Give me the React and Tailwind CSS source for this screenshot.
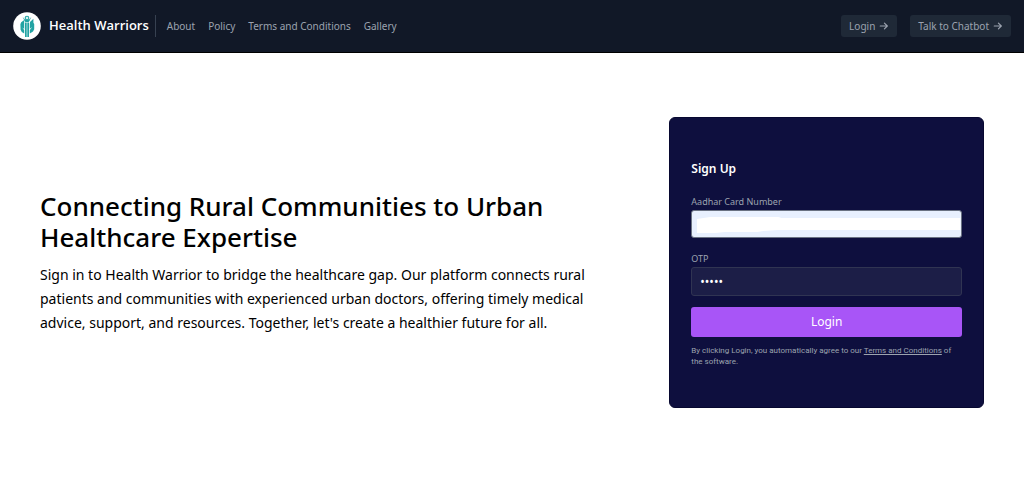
import React from "react";

const navLinks = ["About", "Policy", "Terms and Conditions", "Gallery"];

function Logo() {
  return (
    <svg viewBox="0 0 28 28" className="h-7 w-7" aria-hidden="true">
      <circle cx="14" cy="14" r="13.8" fill="#fff" />
      <g fill="#22a3a3">
        <path d="M11.2 8 8.2 10.3 7.4 12.3 7.6 17.8 8.8 20 11.2 21.4V18L9.2 15.4 11.2 17V12Z" />
        <path d="M17 10 20.4 6.8V10.8L21.2 12V17.2L20 19.6 16.8 21.4V18L19.2 15 16.8 16.8V12Z" />
        <path d="M9.6 4.8 11.4 8.8 12.4 10H15.6L16.6 8.8 18.4 4.8 16.2 7.6H11.8Z" />
        <path d="M12 10.4H13.7V25H12ZM14.3 10.4H16V25H14.3Z" />
      </g>
      <circle cx="14" cy="6" r="1.8" fill="#d6f0f0" stroke="#22a3a3" strokeWidth="1.1" />
    </svg>
  );
}

function Arrow() {
  return (
    <svg viewBox="0 0 24 24" className="h-[10px] w-[10px]" fill="none" stroke="currentColor" strokeWidth="2.8" strokeLinecap="round" strokeLinejoin="round" aria-hidden="true">
      <path d="M3 12h17M13 5l7 7-7 7" />
    </svg>
  );
}

function HeaderButton({ children }) {
  return (
    <button type="button" className="flex h-[22px] items-center gap-1 rounded-[3px] bg-[#1f2937] px-2 text-[10px] leading-none text-[#9ca3af]">
      {children}
      <Arrow />
    </button>
  );
}

export default function App() {
  return (
    <div className="bg-white font-['Noto_Sans','Open_Sans',sans-serif] text-black">
      <header className="flex items-center justify-between border-b border-black bg-[#111827] px-[13px] py-3">
        <div className="flex items-center">
          <Logo />
          <span className="ml-2 font-['Open_Sans','Noto_Sans',sans-serif] text-[13px] font-semibold text-white">Health Warriors</span>
          <nav className="ml-[6px] flex h-[22px] items-center gap-[13px] border-l border-[#374151] pl-[11px] text-[10px] text-[#9ca3af]">
            {navLinks.map((link) => (
              <a key={link} href="#">{link}</a>
            ))}
          </nav>
        </div>
        <div className="flex gap-[13px]">
          <HeaderButton>Login</HeaderButton>
          <HeaderButton>Talk to Chatbot</HeaderButton>
        </div>
      </header>

      <main className="flex items-center justify-between px-10 py-16">
        <section className="w-3/5 pr-5">
          <h1 className="text-[26px] leading-[31px] font-medium">
            Connecting Rural Communities to Urban Healthcare Expertise
          </h1>
          <p className="mt-[10px] text-[14px] leading-6">
            Sign in to Health Warrior to bridge the healthcare gap. Our platform connects rural patients and communities with experienced urban doctors, offering timely medical advice, support, and resources. Together, let's create a healthier future for all.
          </p>
        </section>

        <form className="flex w-1/3 flex-col rounded-md border border-[#070830] bg-[#0e0f3e] px-[21px] pt-[41px] pb-10" onSubmit={(e) => e.preventDefault()}>
          <h2 className="mb-[14px] text-[12px] leading-5 font-semibold text-white">Sign Up</h2>
          <label htmlFor="aadhar" className="text-[9px] leading-[17px] text-[#9ca3af]">Aadhar Card Number</label>
          <div className="relative mb-3">
            <input id="aadhar" type="text" className="block h-7 w-full rounded-[3px] border border-gray-500 bg-[#e8f0fe] px-2 text-[13px] text-black outline-none" />
            <svg viewBox="0 0 264 16" preserveAspectRatio="none" className="pointer-events-none absolute top-[7px] left-1 h-4" width="98%" aria-hidden="true">
              <path d="M2 2 15 0H83L86 1H264V13H82L68 14 62 15H30L20 16H2Z" fill="#fff" />
            </svg>
          </div>
          <label htmlFor="otp" className="text-[9px] leading-[17px] text-[#9ca3af]">OTP</label>
          <input id="otp" type="password" defaultValue="12345" className="mb-[11px] h-[29px] w-full rounded-[3px] border border-[#303452] bg-[#1c1e47] px-2 text-[12px] text-white outline-none" />
          <button type="submit" className="h-[30px] rounded-[3px] bg-[#a855f7] text-[12px] text-white">Login</button>
          <p className="mt-2 font-['Roboto','Noto_Sans',sans-serif] text-[8px] leading-[11px] text-[#9ca3af]">
            By clicking Login, you automatically agree to our <a href="#" className="underline">Terms and Conditions</a> of the software.
          </p>
        </form>
      </main>
    </div>
  );
}
